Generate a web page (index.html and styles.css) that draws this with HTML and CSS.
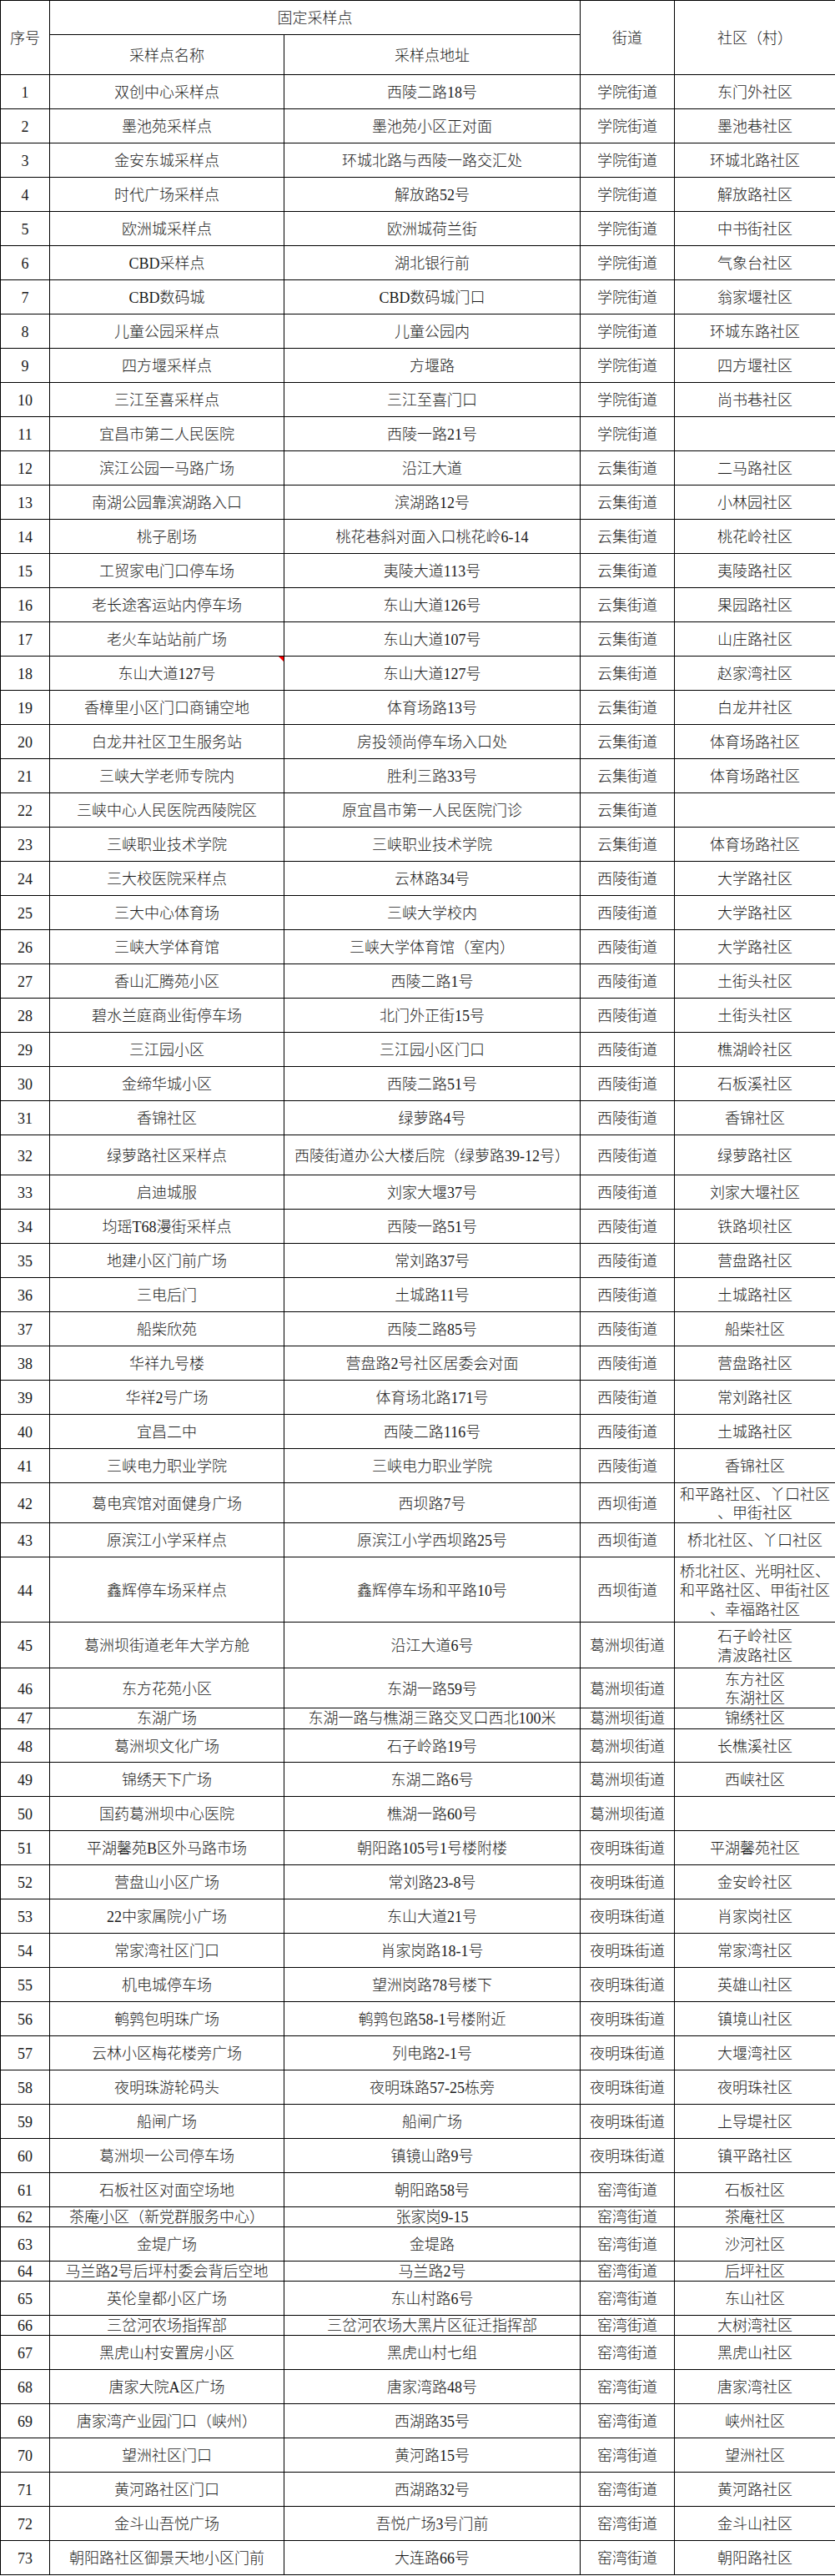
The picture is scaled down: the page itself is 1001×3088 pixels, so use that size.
FILE: index.html
```
<!DOCTYPE html>
<html lang="zh-CN">
<head>
<meta charset="utf-8">
<title>固定采样点</title>
<link rel="stylesheet" href="styles.css">
</head>
<body>
<table class="sheet">
<colgroup><col class="c1"><col class="c2"><col class="c3"><col class="c4"><col class="c5"></colgroup>
<thead>
<tr class="h41"><th rowspan="2">序号</th><th colspan="2">固定采样点</th><th rowspan="2">街道</th><th rowspan="2">社区（村）</th></tr>
<tr class="h48"><th>采样点名称</th><th>采样点地址</th></tr>
</thead>
<tbody>
<tr><td>1</td><td>双创中心采样点</td><td>西陵二路18号</td><td>学院街道</td><td>东门外社区</td></tr>
<tr><td>2</td><td>墨池苑采样点</td><td>墨池苑小区正对面</td><td>学院街道</td><td>墨池巷社区</td></tr>
<tr><td>3</td><td>金安东城采样点</td><td>环城北路与西陵一路交汇处</td><td>学院街道</td><td>环城北路社区</td></tr>
<tr><td>4</td><td>时代广场采样点</td><td>解放路52号</td><td>学院街道</td><td>解放路社区</td></tr>
<tr><td>5</td><td>欧洲城采样点</td><td>欧洲城荷兰街</td><td>学院街道</td><td>中书街社区</td></tr>
<tr><td>6</td><td>CBD采样点</td><td>湖北银行前</td><td>学院街道</td><td>气象台社区</td></tr>
<tr><td>7</td><td>CBD数码城</td><td>CBD数码城门口</td><td>学院街道</td><td>翁家堰社区</td></tr>
<tr><td>8</td><td>儿童公园采样点</td><td>儿童公园内</td><td>学院街道</td><td>环城东路社区</td></tr>
<tr><td>9</td><td>四方堰采样点</td><td>方堰路</td><td>学院街道</td><td>四方堰社区</td></tr>
<tr><td>10</td><td>三江至喜采样点</td><td>三江至喜门口</td><td>学院街道</td><td>尚书巷社区</td></tr>
<tr><td>11</td><td>宜昌市第二人民医院</td><td>西陵一路21号</td><td>学院街道</td><td></td></tr>
<tr><td>12</td><td>滨江公园一马路广场</td><td>沿江大道</td><td>云集街道</td><td>二马路社区</td></tr>
<tr><td>13</td><td>南湖公园靠滨湖路入口</td><td>滨湖路12号</td><td>云集街道</td><td>小林园社区</td></tr>
<tr><td>14</td><td>桃子剧场</td><td>桃花巷斜对面入口桃花岭6-14</td><td>云集街道</td><td>桃花岭社区</td></tr>
<tr><td>15</td><td>工贸家电门口停车场</td><td>夷陵大道113号</td><td>云集街道</td><td>夷陵路社区</td></tr>
<tr><td>16</td><td>老长途客运站内停车场</td><td>东山大道126号</td><td>云集街道</td><td>果园路社区</td></tr>
<tr><td>17</td><td>老火车站站前广场</td><td>东山大道107号</td><td>云集街道</td><td>山庄路社区</td></tr>
<tr><td>18</td><td class="note">东山大道127号</td><td>东山大道127号</td><td>云集街道</td><td>赵家湾社区</td></tr>
<tr><td>19</td><td>香樟里小区门口商铺空地</td><td>体育场路13号</td><td>云集街道</td><td>白龙井社区</td></tr>
<tr><td>20</td><td>白龙井社区卫生服务站</td><td>房投领尚停车场入口处</td><td>云集街道</td><td>体育场路社区</td></tr>
<tr><td>21</td><td>三峡大学老师专院内</td><td>胜利三路33号</td><td>云集街道</td><td>体育场路社区</td></tr>
<tr><td>22</td><td>三峡中心人民医院西陵院区</td><td>原宜昌市第一人民医院门诊</td><td>云集街道</td><td></td></tr>
<tr><td>23</td><td>三峡职业技术学院</td><td>三峡职业技术学院</td><td>云集街道</td><td>体育场路社区</td></tr>
<tr><td>24</td><td>三大校医院采样点</td><td>云林路34号</td><td>西陵街道</td><td>大学路社区</td></tr>
<tr><td>25</td><td>三大中心体育场</td><td>三峡大学校内</td><td>西陵街道</td><td>大学路社区</td></tr>
<tr><td>26</td><td>三峡大学体育馆</td><td>三峡大学体育馆（室内）</td><td>西陵街道</td><td>大学路社区</td></tr>
<tr><td>27</td><td>香山汇腾苑小区</td><td>西陵二路1号</td><td>西陵街道</td><td>土街头社区</td></tr>
<tr><td>28</td><td>碧水兰庭商业街停车场</td><td>北门外正街15号</td><td>西陵街道</td><td>土街头社区</td></tr>
<tr><td>29</td><td>三江园小区</td><td>三江园小区门口</td><td>西陵街道</td><td>樵湖岭社区</td></tr>
<tr><td>30</td><td>金缔华城小区</td><td>西陵二路51号</td><td>西陵街道</td><td>石板溪社区</td></tr>
<tr><td>31</td><td>香锦社区</td><td>绿萝路4号</td><td>西陵街道</td><td>香锦社区</td></tr>
<tr class="h48"><td>32</td><td>绿萝路社区采样点</td><td>西陵街道办公大楼后院（绿萝路39-12号）</td><td>西陵街道</td><td>绿萝路社区</td></tr>
<tr><td>33</td><td>启迪城服</td><td>刘家大堰37号</td><td>西陵街道</td><td>刘家大堰社区</td></tr>
<tr><td>34</td><td>均瑶T68漫街采样点</td><td>西陵一路51号</td><td>西陵街道</td><td>铁路坝社区</td></tr>
<tr><td>35</td><td>地建小区门前广场</td><td>常刘路37号</td><td>西陵街道</td><td>营盘路社区</td></tr>
<tr><td>36</td><td>三电后门</td><td>土城路11号</td><td>西陵街道</td><td>土城路社区</td></tr>
<tr><td>37</td><td>船柴欣苑</td><td>西陵二路85号</td><td>西陵街道</td><td>船柴社区</td></tr>
<tr><td>38</td><td>华祥九号楼</td><td>营盘路2号社区居委会对面</td><td>西陵街道</td><td>营盘路社区</td></tr>
<tr><td>39</td><td>华祥2号广场</td><td>体育场北路171号</td><td>西陵街道</td><td>常刘路社区</td></tr>
<tr><td>40</td><td>宜昌二中</td><td>西陵二路116号</td><td>西陵街道</td><td>土城路社区</td></tr>
<tr><td>41</td><td>三峡电力职业学院</td><td>三峡电力职业学院</td><td>西陵街道</td><td>香锦社区</td></tr>
<tr class="h48"><td>42</td><td>葛电宾馆对面健身广场</td><td>西坝路7号</td><td>西坝街道</td><td>和平路社区、丫口社区<br>、甲街社区</td></tr>
<tr><td>43</td><td>原滨江小学采样点</td><td>原滨江小学西坝路25号</td><td>西坝街道</td><td>桥北社区、丫口社区</td></tr>
<tr class="h78"><td>44</td><td>鑫辉停车场采样点</td><td>鑫辉停车场和平路10号</td><td>西坝街道</td><td>桥北社区、光明社区、<br>和平路社区、甲街社区<br>、幸福路社区</td></tr>
<tr class="h55"><td>45</td><td>葛洲坝街道老年大学方舱</td><td>沿江大道6号</td><td>葛洲坝街道</td><td>石子岭社区<br>清波路社区</td></tr>
<tr class="h48"><td>46</td><td>东方花苑小区</td><td>东湖一路59号</td><td>葛洲坝街道</td><td>东方社区<br>东湖社区</td></tr>
<tr class="short h25"><td>47</td><td>东湖广场</td><td>东湖一路与樵湖三路交叉口西北100米</td><td>葛洲坝街道</td><td>锦绣社区</td></tr>
<tr class="h40"><td>48</td><td>葛洲坝文化广场</td><td>石子岭路19号</td><td>葛洲坝街道</td><td>长樵溪社区</td></tr>
<tr><td>49</td><td>锦绣天下广场</td><td>东湖二路6号</td><td>葛洲坝街道</td><td>西峡社区</td></tr>
<tr><td>50</td><td>国药葛洲坝中心医院</td><td>樵湖一路60号</td><td>葛洲坝街道</td><td></td></tr>
<tr><td>51</td><td>平湖馨苑B区外马路市场</td><td>朝阳路105号1号楼附楼</td><td>夜明珠街道</td><td>平湖馨苑社区</td></tr>
<tr><td>52</td><td>营盘山小区广场</td><td>常刘路23-8号</td><td>夜明珠街道</td><td>金安岭社区</td></tr>
<tr><td>53</td><td>22中家属院小广场</td><td>东山大道21号</td><td>夜明珠街道</td><td>肖家岗社区</td></tr>
<tr><td>54</td><td>常家湾社区门口</td><td>肖家岗路18-1号</td><td>夜明珠街道</td><td>常家湾社区</td></tr>
<tr><td>55</td><td>机电城停车场</td><td>望洲岗路78号楼下</td><td>夜明珠街道</td><td>英雄山社区</td></tr>
<tr><td>56</td><td>鹌鹑包明珠广场</td><td>鹌鹑包路58-1号楼附近</td><td>夜明珠街道</td><td>镇境山社区</td></tr>
<tr><td>57</td><td>云林小区梅花楼旁广场</td><td>列电路2-1号</td><td>夜明珠街道</td><td>大堰湾社区</td></tr>
<tr><td>58</td><td>夜明珠游轮码头</td><td>夜明珠路57-25栋旁</td><td>夜明珠街道</td><td>夜明珠社区</td></tr>
<tr><td>59</td><td>船闸广场</td><td>船闸广场</td><td>夜明珠街道</td><td>上导堤社区</td></tr>
<tr><td>60</td><td>葛洲坝一公司停车场</td><td>镇镜山路9号</td><td>夜明珠街道</td><td>镇平路社区</td></tr>
<tr><td>61</td><td>石板社区对面空场地</td><td>朝阳路58号</td><td>窑湾街道</td><td>石板社区</td></tr>
<tr class="short h24"><td>62</td><td>茶庵小区（新党群服务中心）</td><td>张家岗9-15</td><td>窑湾街道</td><td>茶庵社区</td></tr>
<tr><td>63</td><td>金堤广场</td><td>金堤路</td><td>窑湾街道</td><td>沙河社区</td></tr>
<tr class="short h24"><td>64</td><td>马兰路2号后坪村委会背后空地</td><td>马兰路2号</td><td>窑湾街道</td><td>后坪社区</td></tr>
<tr><td>65</td><td>英伦皇都小区广场</td><td>东山村路6号</td><td>窑湾街道</td><td>东山社区</td></tr>
<tr class="short h24"><td>66</td><td>三岔河农场指挥部</td><td>三岔河农场大黑片区征迁指挥部</td><td>窑湾街道</td><td>大树湾社区</td></tr>
<tr><td>67</td><td>黑虎山村安置房小区</td><td>黑虎山村七组</td><td>窑湾街道</td><td>黑虎山社区</td></tr>
<tr><td>68</td><td>唐家大院A区广场</td><td>唐家湾路48号</td><td>窑湾街道</td><td>唐家湾社区</td></tr>
<tr><td>69</td><td>唐家湾产业园门口（峡州）</td><td>西湖路35号</td><td>窑湾街道</td><td>峡州社区</td></tr>
<tr><td>70</td><td>望洲社区门口</td><td>黄河路15号</td><td>窑湾街道</td><td>望洲社区</td></tr>
<tr><td>71</td><td>黄河路社区门口</td><td>西湖路32号</td><td>窑湾街道</td><td>黄河路社区</td></tr>
<tr><td>72</td><td>金斗山吾悦广场</td><td>吾悦广场3号门前</td><td>窑湾街道</td><td>金斗山社区</td></tr>
<tr><td>73</td><td>朝阳路社区御景天地小区门前</td><td>大连路66号</td><td>窑湾街道</td><td>朝阳路社区</td></tr>
</tbody>
</table>
</body>
</html>
```
FILE: styles.css
```
* {
  box-sizing: border-box;
}

html,
body {
  margin: 0;
  padding: 0;
  background: #ffffff;
}

.sheet {
  border-collapse: collapse;
  table-layout: fixed;
  width: 1001px;
  font-family: "Liberation Serif", "Noto Sans CJK SC", serif;
  font-size: 18px;
  font-weight: 300;
  color: #1a1a1a;
}

.c1 { width: 59px; }
.c2 { width: 281px; }
.c3 { width: 355px; }
.c4 { width: 113px; }
.c5 { width: 193px; }

.sheet th,
.sheet td {
  border: 1px solid #000000;
  padding: 3px 0 0 0;
  text-align: center;
  vertical-align: middle;
  line-height: 23px;
  font-weight: 300;
  white-space: nowrap;
  overflow: hidden;
}

.sheet tr { height: 41px; }
.sheet tr.h40 { height: 40px; }
.sheet tr.h41 { height: 41px; }
.sheet tr.h48 { height: 48px; }
.sheet tr.h55 { height: 55px; }
.sheet tr.h78 { height: 78px; }
.sheet tr.h25 { height: 25px; }
.sheet tr.h24 { height: 24px; }

.sheet tr.h48 td,
.sheet tr.h48 th {
  line-height: 22px;
  padding-top: 2px;
}

.sheet tr.short td {
  padding: 0;
  line-height: 22px;
}

.sheet td.note {
  position: relative;
  overflow: visible;
}

.sheet td.note::after {
  content: "";
  position: absolute;
  top: 0;
  right: 0;
  width: 0;
  height: 0;
  border-top: 6px solid #ff0000;
  border-left: 6px solid transparent;
}
```
